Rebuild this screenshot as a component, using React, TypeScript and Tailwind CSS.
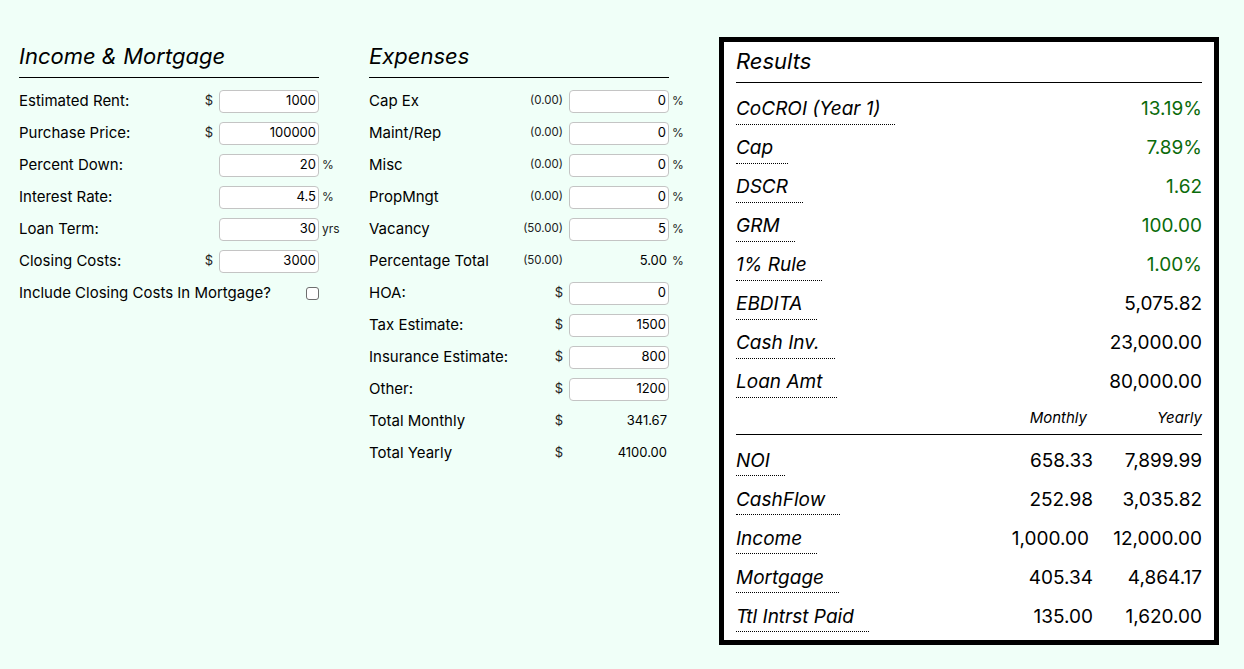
import { ReactNode } from "react";

const font = { fontFamily: "Inter, 'Noto Sans', sans-serif" };

interface IInputRow {
  label: string;
  prefix?: string;
  value: string;
  unit?: string;
}

const incomeRows: IInputRow[] = [
  { label: "Estimated Rent:", prefix: "$", value: "1000" },
  { label: "Purchase Price:", prefix: "$", value: "100000" },
  { label: "Percent Down:", value: "20", unit: "%" },
  { label: "Interest Rate:", value: "4.5", unit: "%" },
  { label: "Loan Term:", value: "30", unit: "yrs" },
  { label: "Closing Costs:", prefix: "$", value: "3000" },
];

const expensePct: IInputRow[] = [
  { label: "Cap Ex", prefix: "(0.00)", value: "0", unit: "%" },
  { label: "Maint/Rep", prefix: "(0.00)", value: "0", unit: "%" },
  { label: "Misc", prefix: "(0.00)", value: "0", unit: "%" },
  { label: "PropMngt", prefix: "(0.00)", value: "0", unit: "%" },
  { label: "Vacancy", prefix: "(50.00)", value: "5", unit: "%" },
];

const expenseDollar: IInputRow[] = [
  { label: "HOA:", prefix: "$", value: "0" },
  { label: "Tax Estimate:", prefix: "$", value: "1500" },
  { label: "Insurance Estimate:", prefix: "$", value: "800" },
  { label: "Other:", prefix: "$", value: "1200" },
];

const topResults = [
  { label: "CoCROI (Year 1)", value: "13.19%", green: true },
  { label: "Cap", value: "7.89%", green: true },
  { label: "DSCR", value: "1.62", green: true },
  { label: "GRM", value: "100.00", green: true },
  { label: "1% Rule", value: "1.00%", green: true },
  { label: "EBDITA", value: "5,075.82" },
  { label: "Cash Inv.", value: "23,000.00" },
  { label: "Loan Amt", value: "80,000.00" },
];

const periodResults = [
  { label: "NOI", monthly: "658.33", yearly: "7,899.99" },
  { label: "CashFlow", monthly: "252.98", yearly: "3,035.82" },
  { label: "Income", monthly: "1,000.00", yearly: "12,000.00", shift: true },
  { label: "Mortgage", monthly: "405.34", yearly: "4,864.17" },
  { label: "Ttl Intrst Paid", monthly: "135.00", yearly: "1,620.00" },
];

const Field = ({ value }: { value: string }) => (
  <div className="w-[100px] h-[23px] bg-white border border-[#c4c4c4] rounded-[4px] flex items-center justify-end pr-[2px] text-[13px] text-black">
    {value}
  </div>
);

const Row = ({
  label,
  prefix,
  unit,
  small,
  children,
}: {
  label: string;
  prefix?: string;
  unit?: string;
  small?: boolean;
  children: ReactNode;
}) => (
  <div className="flex items-center h-[32px] w-[350px]">
    <span className="flex-1 text-[15px] text-black">{label}</span>
    <span
      className={
        small
          ? "pr-[6px] text-[11.5px] text-[#222]"
          : "pr-[6px] text-[13px] text-[#222]"
      }
    >
      {prefix}
    </span>
    {children}
    <span className="w-[50px] pl-[3px] text-[12px] text-[#222]">{unit}</span>
  </div>
);

const Heading = ({ title }: { title: string }) => (
  <h2 className="w-[300px] text-[22px] leading-[28px] italic text-black pb-[7px] border-b border-black mt-[4px] mb-[7px]">
    {title}
  </h2>
);

const ResultLabel = ({ text }: { text: string }) => (
  <span className="italic text-[19px] leading-[24px] pr-[15px] pb-[3px] border-b border-dotted border-black text-black">
    {text}
  </span>
);

const App = () => {
  return (
    <div
      className="min-h-[669px] w-full bg-[#f0fff8] pl-[19px] pt-[38px] flex"
      style={font}
    >
      {/* Income & Mortgage */}
      <section className="w-[350px]">
        <Heading title="Income & Mortgage" />
        {incomeRows.map((item) => (
          <Row key={item.label} label={item.label} prefix={item.prefix} unit={item.unit}>
            <Field value={item.value} />
          </Row>
        ))}
        <div className="flex items-center h-[32px] w-[300px]">
          <span className="flex-1 text-[15px] text-black">
            Include Closing Costs In Mortgage?
          </span>
          <span className="w-[13px] h-[13px] border-[1.5px] border-[#6e6e6e] rounded-[3px] bg-white" />
        </div>
      </section>

      {/* Expenses */}
      <section className="w-[350px]">
        <Heading title="Expenses" />
        {expensePct.map((item) => (
          <Row key={item.label} label={item.label} prefix={item.prefix} unit={item.unit} small>
            <Field value={item.value} />
          </Row>
        ))}
        <Row label="Percentage Total" prefix="(50.00)" unit="%" small>
          <div className="w-[100px] text-right pr-[2px] text-[13px] text-black">5.00</div>
        </Row>
        {expenseDollar.map((item) => (
          <Row key={item.label} label={item.label} prefix={item.prefix}>
            <Field value={item.value} />
          </Row>
        ))}
        <Row label="Total Monthly" prefix="$">
          <div className="w-[100px] text-right pr-[2px] text-[13px] text-black">341.67</div>
        </Row>
        <Row label="Total Yearly" prefix="$">
          <div className="w-[100px] text-right pr-[2px] text-[13px] text-black">4100.00</div>
        </Row>
      </section>

      {/* Results */}
      <section className="w-[500px] h-[608px] -mt-[1px] border-[5px] border-black bg-white px-[12px] pt-[5px]">
        <h2 className="text-[22px] leading-[28px] italic text-black pb-[7px] border-b border-black mb-[7px]">
          Results
        </h2>
        {topResults.map((item) => (
          <div key={item.label} className="flex items-start justify-between h-[39px] pt-[7px]">
            <ResultLabel text={item.label} />
            <span
              className={
                item.green
                  ? "text-[19px] leading-[24px] text-[#0b6b0b]"
                  : "text-[19px] leading-[24px] text-black"
              }
            >
              {item.value}
            </span>
          </div>
        ))}
        <div className="flex justify-end items-center h-[33px] pt-[6px] pb-[7px] border-b border-black text-[15px] leading-[20px] italic text-black">
          <span className="w-[100px] text-right pr-[6px]">Monthly</span>
          <span className="w-[109px] text-right">Yearly</span>
        </div>
        <div className="mt-[7px]">
          {periodResults.map((item) => (
            <div key={item.label} className="flex items-start h-[39px] pt-[7px]">
              <div className="flex-1">
                <ResultLabel text={item.label} />
              </div>
              <span
                className={
                  item.shift
                    ? "w-[120px] text-right pr-[4px] text-[19px] leading-[24px] text-black"
                    : "w-[120px] text-right text-[19px] leading-[24px] text-black"
                }
              >
                {item.monthly}
              </span>
              <span className="w-[109px] text-right text-[19px] leading-[24px] text-black">
                {item.yearly}
              </span>
            </div>
          ))}
        </div>
      </section>
    </div>
  );
};

export default App;
